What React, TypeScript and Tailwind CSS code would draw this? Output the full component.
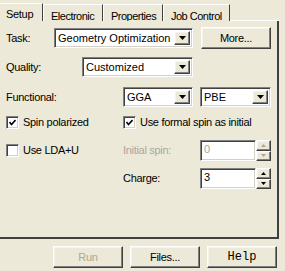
import React from "react";

const sunken =
  "border border-t-[#808080] border-l-[#808080] border-b-white border-r-white shadow-[inset_1px_1px_0_#404040,inset_-1px_-1px_0_#d4d0c8]";
const raised =
  "border border-t-white border-l-white border-b-[#404040] border-r-[#404040] shadow-[inset_-1px_-1px_0_#808080,inset_1px_1px_0_#f4f3ee]";

function Arrow({ color = "#000" }: { color?: string }) {
  return (
    <svg width="7" height="4" viewBox="0 0 7 4">
      <polygon points="0,0 7,0 3.5,4" fill={color} />
    </svg>
  );
}

function Combo({ value, w }: { value: string; w: string }) {
  return (
    <div className={`${w} h-[20px] bg-white flex items-stretch ${sunken} p-[2px]`}>
      <span className="flex-1 pl-[1px] leading-[14px] tracking-normal">{value}</span>
      <span className={`w-[16px] bg-[#ece9d8] flex items-center justify-center ${raised}`}>
        <Arrow />
      </span>
    </div>
  );
}

function Check({ checked, label }: { checked: boolean; label: string }) {
  return (
    <div className="flex items-center gap-[4px]">
      <span className={`w-[13px] h-[13px] bg-white flex items-center justify-center ${sunken}`}>
        {checked && (
          <svg width="7" height="7" viewBox="0 0 7 7">
            <polyline points="0.5,3 2.5,5.5 6.5,1" fill="none" stroke="#000" strokeWidth="1.6" />
          </svg>
        )}
      </span>
      <span>{label}</span>
    </div>
  );
}

function Spin({ value, disabled }: { value: string; disabled?: boolean }) {
  const ac = disabled ? "#aca899" : "#000";
  return (
    <div className="flex h-[21px]">
      <div className={`w-[56px] h-full bg-white ${sunken} pl-[3px] leading-[17px] ${disabled ? "text-[#aca899]" : ""}`}>
        {value}
      </div>
      <div className="flex flex-col w-[15px] h-full">
        <span className={`flex-1 bg-[#ece9d8] flex items-center justify-center ${raised}`}>
          <svg width="5" height="3" viewBox="0 0 5 3"><polygon points="0,3 5,3 2.5,0" fill={ac} /></svg>
        </span>
        <span className={`flex-1 bg-[#ece9d8] flex items-center justify-center ${raised}`}>
          <svg width="5" height="3" viewBox="0 0 5 3"><polygon points="0,0 5,0 2.5,3" fill={ac} /></svg>
        </span>
      </div>
    </div>
  );
}

function Button({ children, className = "" }: { children: React.ReactNode; className?: string }) {
  return (
    <div className={`w-[70px] h-[22px] bg-[#ece9d8] flex items-center justify-center ${raised} ${className}`}>
      {children}
    </div>
  );
}

export default function App() {
  const tabs = [
    { t: "Electronic", w: "w-[60px]" },
    { t: "Properties", w: "w-[60px]" },
    { t: "Job Control", w: "w-[67px]" },
  ];
  return (
    <div className="w-[285px] h-[271px] bg-[#ece9d8] overflow-hidden text-[11px] tracking-[-0.3px] text-black font-['Liberation_Sans',Arial,sans-serif]">
      {/* tab strip */}
      <div className="flex h-[21px] pt-[3px]">
        <div className="w-[43px] pl-[6px] pt-[2px] border-t border-white border-r border-r-[#404040] whitespace-nowrap">Setup</div>
        {tabs.map(({ t, w }) => (
          <div key={t} className={`${w} pl-[7px] pt-[3px] mt-[1px] border-t border-l border-white border-r border-r-[#404040] whitespace-nowrap overflow-hidden tracking-[-0.5px]`}>
            {t}
          </div>
        ))}
        <div className="flex-1 border-b border-white mr-[6px]" />
      </div>

      {/* panel */}
      <div className="w-[279px] h-[218px] border-r-2 border-b-2 border-[#404040] flex flex-col pt-[7px]">
        <div className="flex items-center h-[20px] pl-[6px]">
          <span className="w-[48px]">Task:</span>
          <Combo value="Geometry Optimization" w="w-[139px]" />
          <Button className="ml-[8px] w-[68px] h-[21px]">More...</Button>
        </div>

        <div className="flex items-center h-[20px] pl-[6px] mt-[9px]">
          <span className="w-[76px]">Quality:</span>
          <Combo value="Customized" w="w-[111px]" />
        </div>

        <div className="flex items-center h-[20px] pl-[6px] mt-[10px]">
          <span className="w-[117px]">Functional:</span>
          <Combo value="GGA" w="w-[70px]" />
          <div className="ml-[7px]">
            <Combo value="PBE" w="w-[71px]" />
          </div>
        </div>

        <div className="flex items-center h-[13px] pl-[6px] mt-[9px]">
          <div className="w-[117px]">
            <Check checked label="Spin polarized" />
          </div>
          <Check checked label="Use formal spin as initial" />
        </div>

        <div className="flex items-center h-[21px] pl-[6px] mt-[11px]">
          <div className="w-[117px]">
            <Check checked={false} label="Use LDA+U" />
          </div>
          <span className="w-[77px] text-[#aca899]">Initial spin:</span>
          <Spin value="0" disabled />
        </div>

        <div className="flex items-center h-[21px] pl-[123px] mt-[7px]">
          <span className="w-[77px]">Charge:</span>
          <Spin value="3" />
        </div>
      </div>

      {/* bottom buttons */}
      <div className="flex justify-end gap-[7px] pr-[8px] mt-[7px]">
        <Button className="text-[#aca899]">Run</Button>
        <Button>Files...</Button>
        <Button className="font-['Liberation_Mono',monospace] text-[12px] tracking-normal">Help</Button>
      </div>
    </div>
  );
}
